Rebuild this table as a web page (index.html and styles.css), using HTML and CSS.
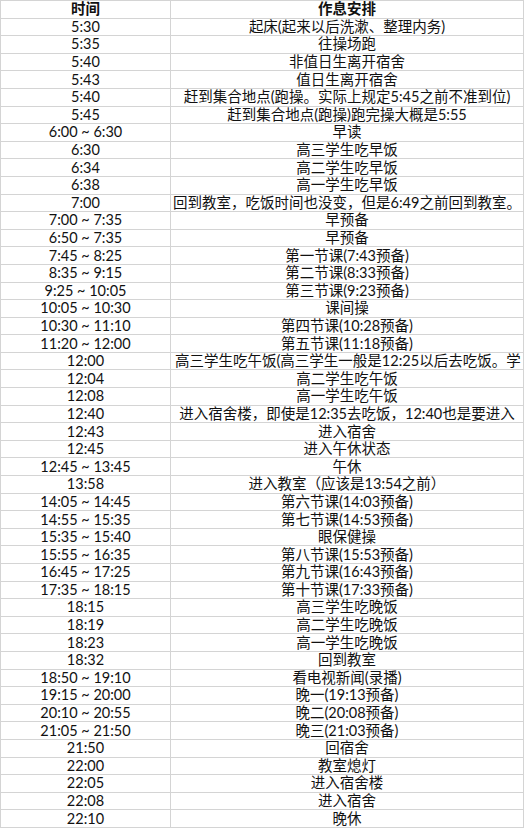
FILE: index.html
```html
<!DOCTYPE html>
<html lang="zh-CN">
<head>
<meta charset="utf-8">
<title>作息安排</title>
<link rel="stylesheet" href="styles.css">
</head>
<body>
<div class="sheet">
  <div class="cell head">时间</div><div class="cell head">作息安排</div>
  <div class="cell">5:30</div><div class="cell">起床(起来以后洗漱、整理内务)</div>
  <div class="cell">5:35</div><div class="cell">往操场跑</div>
  <div class="cell">5:40</div><div class="cell">非值日生离开宿舍</div>
  <div class="cell">5:43</div><div class="cell">值日生离开宿舍</div>
  <div class="cell">5:40</div><div class="cell">赶到集合地点(跑操。实际上规定5:45之前不准到位)</div>
  <div class="cell">5:45</div><div class="cell">赶到集合地点(跑操)跑完操大概是5:55</div>
  <div class="cell">6:00 ~ 6:30</div><div class="cell">早读</div>
  <div class="cell">6:30</div><div class="cell">高三学生吃早饭</div>
  <div class="cell">6:34</div><div class="cell">高二学生吃早饭</div>
  <div class="cell">6:38</div><div class="cell">高一学生吃早饭</div>
  <div class="cell">7:00</div><div class="cell">回到教室，吃饭时间也没变，但是6:49之前回到教室。</div>
  <div class="cell">7:00 ~ 7:35</div><div class="cell">早预备</div>
  <div class="cell">6:50 ~ 7:35</div><div class="cell">早预备</div>
  <div class="cell">7:45 ~ 8:25</div><div class="cell">第一节课(7:43预备)</div>
  <div class="cell">8:35 ~ 9:15</div><div class="cell">第二节课(8:33预备)</div>
  <div class="cell">9:25 ~ 10:05</div><div class="cell">第三节课(9:23预备)</div>
  <div class="cell">10:05 ~ 10:30</div><div class="cell">课间操</div>
  <div class="cell">10:30 ~ 11:10</div><div class="cell">第四节课(10:28预备)</div>
  <div class="cell">11:20 ~ 12:00</div><div class="cell">第五节课(11:18预备)</div>
  <div class="cell">12:00</div><div class="cell clip">高三学生吃午饭(高三学生一般是12:25以后去吃饭。学</div>
  <div class="cell">12:04</div><div class="cell">高二学生吃午饭</div>
  <div class="cell">12:08</div><div class="cell">高一学生吃午饭</div>
  <div class="cell">12:40</div><div class="cell">进入宿舍楼，即使是12:35去吃饭，12:40也是要进入</div>
  <div class="cell">12:43</div><div class="cell">进入宿舍</div>
  <div class="cell">12:45</div><div class="cell">进入午休状态</div>
  <div class="cell">12:45 ~ 13:45</div><div class="cell">午休</div>
  <div class="cell">13:58</div><div class="cell">进入教室（应该是13:54之前）</div>
  <div class="cell">14:05 ~ 14:45</div><div class="cell">第六节课(14:03预备)</div>
  <div class="cell">14:55 ~ 15:35</div><div class="cell">第七节课(14:53预备)</div>
  <div class="cell">15:35 ~ 15:40</div><div class="cell">眼保健操</div>
  <div class="cell">15:55 ~ 16:35</div><div class="cell">第八节课(15:53预备)</div>
  <div class="cell">16:45 ~ 17:25</div><div class="cell">第九节课(16:43预备)</div>
  <div class="cell">17:35 ~ 18:15</div><div class="cell">第十节课(17:33预备)</div>
  <div class="cell">18:15</div><div class="cell">高三学生吃晚饭</div>
  <div class="cell">18:19</div><div class="cell">高二学生吃晚饭</div>
  <div class="cell">18:23</div><div class="cell">高一学生吃晚饭</div>
  <div class="cell">18:32</div><div class="cell">回到教室</div>
  <div class="cell">18:50 ~ 19:10</div><div class="cell">看电视新闻(录播)</div>
  <div class="cell">19:15 ~ 20:00</div><div class="cell">晚一(19:13预备)</div>
  <div class="cell">20:10 ~ 20:55</div><div class="cell">晚二(20:08预备)</div>
  <div class="cell">21:05 ~ 21:50</div><div class="cell">晚三(21:03预备)</div>
  <div class="cell">21:50</div><div class="cell">回宿舍</div>
  <div class="cell">22:00</div><div class="cell">教室熄灯</div>
  <div class="cell">22:05</div><div class="cell">进入宿舍楼</div>
  <div class="cell">22:08</div><div class="cell">进入宿舍</div>
  <div class="cell">22:10</div><div class="cell">晚休</div>
</div>
</body>
</html>
```
FILE: styles.css
```css
html, body {
  margin: 0;
  padding: 0;
  background: #ffffff;
}

.sheet {
  display: grid;
  grid-template-columns: 170px 353px;
  grid-auto-rows: 17.6px;
  width: 523px;
  border-left: 1px solid #d4d4d4;
  border-top: 1px solid #d4d4d4;
  font-family: Lato, "Noto Sans CJK SC", sans-serif;
  font-size: 14.5px;
  color: #111;
}

.cell {
  box-sizing: border-box;
  border-right: 1px solid #d4d4d4;
  border-bottom: 1px solid #d4d4d4;
  display: flex;
  align-items: center;
  justify-content: center;
  white-space: nowrap;
  overflow: hidden;
  line-height: 16px;
}

.head {
  font-weight: bold;
}

.clip {
  justify-content: flex-start;
  padding-left: 4px;
}
```
